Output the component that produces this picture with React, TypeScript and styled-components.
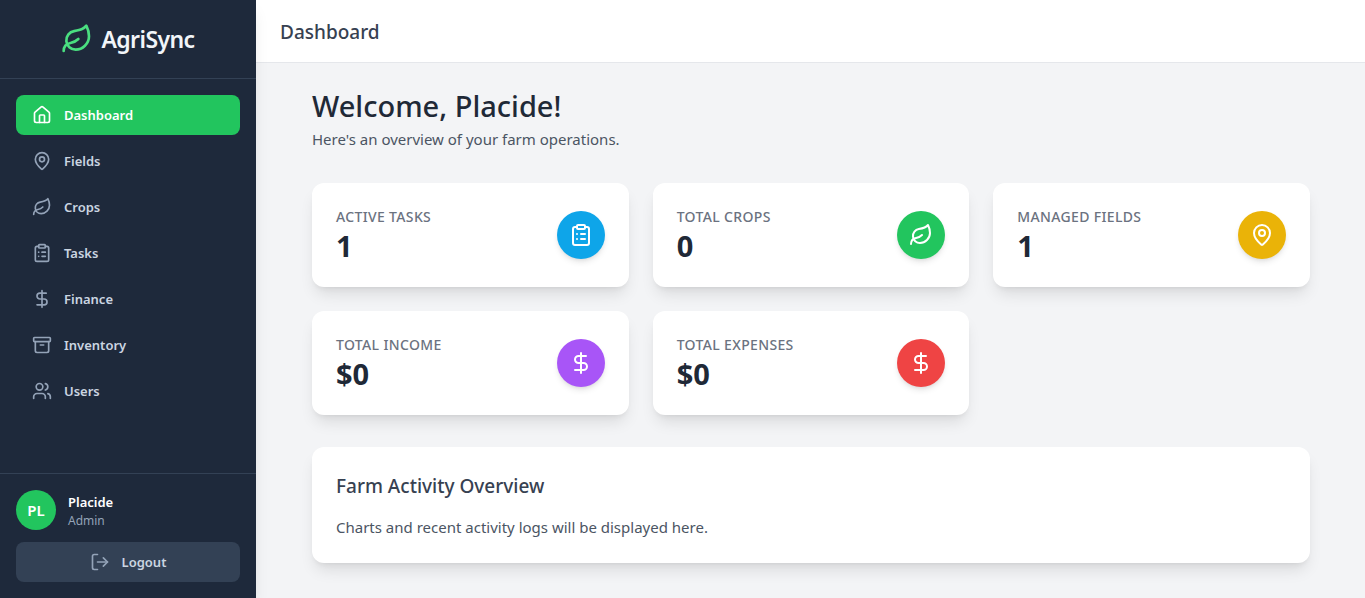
import React from "react";
import styled, { createGlobalStyle } from "styled-components";
import {
  Archive,
  ClipboardList,
  DollarSign,
  House,
  Leaf,
  LogOut,
  MapPin,
  Users,
  type LucideIcon,
} from "lucide-react";

const GlobalStyle = createGlobalStyle`
  *, *::before, *::after { box-sizing: border-box; }
  body {
    margin: 0;
    background: #f3f4f6;
    color: #1f2937;
    font-family: "Segoe UI", "Noto Sans", "Open Sans", sans-serif;
    font-size: 15px;
    line-height: 24px;
  }
  h1, h2, h3, p, ul, dl, dt, dd { margin: 0; padding: 0; }
`;

const Shell = styled.div`
  display: flex;
  min-height: 100vh;
`;

const Sidebar = styled.aside`
  position: relative;
  display: flex;
  flex-direction: column;
  flex: 0 0 256px;
  background: #1e293b;
  color: #f1f5f9;
  box-shadow: 0 10px 15px -3px rgba(0, 0, 0, 0.1), 0 4px 6px -4px rgba(0, 0, 0, 0.1);
`;

const Brand = styled.div`
  display: flex;
  align-items: center;
  justify-content: center;
  gap: 8px;
  padding: 20px;
  border-bottom: 1px solid #334155;
  font-size: 23px;
  font-weight: 600;
  line-height: 38px;
  letter-spacing: -0.025em;

  svg { color: #4ade80; }
`;

const Nav = styled.nav`
  flex: 1;
  padding: 16px;
`;

const NavList = styled.ul`
  display: flex;
  flex-direction: column;
  gap: 6px;
  list-style: none;
`;

const NavLink = styled.a<{ $active: boolean }>`
  display: flex;
  align-items: center;
  gap: 12px;
  padding: 10px 16px;
  border-radius: 8px;
  background: ${(p) => (p.$active ? "#22c55e" : "transparent")};
  color: ${(p) => (p.$active ? "#ffffff" : "#cbd5e1")};
  font-size: 13px;
  font-weight: 600;
  line-height: 20px;
  text-decoration: none;

  svg { color: ${(p) => (p.$active ? "#ffffff" : "#94a3b8")}; }
`;

const Account = styled.div`
  display: flex;
  flex-direction: column;
  gap: 12px;
  padding: 16px;
  border-top: 1px solid #334155;
`;

const Profile = styled.div`
  display: flex;
  align-items: center;
  gap: 12px;
`;

const Avatar = styled.span`
  display: grid;
  place-items: center;
  width: 40px;
  height: 40px;
  border-radius: 50%;
  background: #22c55e;
  color: #ffffff;
  font-size: 15px;
  font-weight: 600;
`;

const ProfileName = styled.p`
  color: #ffffff;
  font-size: 13px;
  font-weight: 600;
  line-height: 22px;
`;

const ProfileRole = styled.p`
  color: #94a3b8;
  font-size: 12px;
  line-height: 16px;
`;

const LogoutButton = styled.button`
  display: flex;
  align-items: center;
  justify-content: center;
  gap: 12px;
  padding: 10px 16px;
  border: 0;
  border-radius: 8px;
  background: #334155;
  color: #cbd5e1;
  font: inherit;
  font-size: 13px;
  font-weight: 600;
  line-height: 20px;
  cursor: pointer;

  svg { color: #94a3b8; }
`;

const Content = styled.div`
  flex: 1;
  min-width: 0;
`;

const TopBar = styled.header`
  padding: 17px 24px 15px;
  border-bottom: 1px solid #e5e7eb;
  background: #ffffff;
`;

const PageTitle = styled.h2`
  color: #374151;
  font-size: 19px;
  font-weight: 500;
  line-height: 30px;
`;

const Main = styled.main`
  display: flex;
  flex-direction: column;
  gap: 32px;
  padding: 24px 55px 32px 56px;
`;

const Greeting = styled.h1`
  margin-bottom: 2px;
  font-size: 29px;
  font-weight: 500;
  line-height: 38px;
`;

const Copy = styled.p`
  color: #4b5563;
`;

const StatGrid = styled.dl`
  display: grid;
  grid-template-columns: repeat(3, minmax(0, 1fr));
  gap: 24px;
`;

const Card = styled.div`
  padding: 24px;
  border-radius: 12px;
  background: #ffffff;
  box-shadow: 0 10px 15px -3px rgba(0, 0, 0, 0.1), 0 4px 6px -4px rgba(0, 0, 0, 0.1);
`;

const StatCard = styled(Card)`
  display: grid;
  grid-template-columns: 1fr auto;
  align-items: center;
`;

const StatLabel = styled.dt`
  color: #6b7280;
  font-size: 14px;
  font-weight: 500;
  line-height: 20px;
  letter-spacing: 0.025em;
  text-transform: uppercase;
`;

const StatValue = styled.dd`
  grid-column: 1;
  padding-top: 2px;
  font-size: 29px;
  font-weight: 700;
  line-height: 34px;
`;

const StatBadge = styled.dd<{ $color: string }>`
  display: grid;
  grid-column: 2;
  grid-row: 1 / span 2;
  place-items: center;
  width: 48px;
  height: 48px;
  border-radius: 50%;
  background: ${(p) => p.$color};
  color: #ffffff;
  box-shadow: 0 4px 6px -1px rgba(0, 0, 0, 0.1), 0 2px 4px -2px rgba(0, 0, 0, 0.1);
`;

const SectionTitle = styled.h3`
  margin-bottom: 14px;
  color: #374151;
  font-size: 19px;
  font-weight: 500;
  line-height: 30px;
`;

const navItems: { label: string; icon: LucideIcon }[] = [
  { label: "Dashboard", icon: House },
  { label: "Fields", icon: MapPin },
  { label: "Crops", icon: Leaf },
  { label: "Tasks", icon: ClipboardList },
  { label: "Finance", icon: DollarSign },
  { label: "Inventory", icon: Archive },
  { label: "Users", icon: Users },
];

const stats: { label: string; value: string; icon: LucideIcon; color: string }[] = [
  { label: "Active Tasks", value: "1", icon: ClipboardList, color: "#0ea5e9" },
  { label: "Total Crops", value: "0", icon: Leaf, color: "#22c55e" },
  { label: "Managed Fields", value: "1", icon: MapPin, color: "#eab308" },
  { label: "Total Income", value: "$0", icon: DollarSign, color: "#a855f7" },
  { label: "Total Expenses", value: "$0", icon: DollarSign, color: "#ef4444" },
];

export default function App() {
  return (
    <>
      <GlobalStyle />
      <Shell>
        <Sidebar>
          <Brand>
            <Leaf size={32} />
            <span>AgriSync</span>
          </Brand>
          <Nav>
            <NavList>
              {navItems.map(({ label, icon: Icon }) => (
                <li key={label}>
                  <NavLink
                    href={`#${label.toLowerCase()}`}
                    $active={label === "Dashboard"}
                    aria-current={label === "Dashboard" ? "page" : undefined}
                  >
                    <Icon size={20} />
                    {label}
                  </NavLink>
                </li>
              ))}
            </NavList>
          </Nav>
          <Account>
            <Profile>
              <Avatar>PL</Avatar>
              <div>
                <ProfileName>Placide</ProfileName>
                <ProfileRole>Admin</ProfileRole>
              </div>
            </Profile>
            <LogoutButton type="button">
              <LogOut size={20} />
              Logout
            </LogoutButton>
          </Account>
        </Sidebar>
        <Content>
          <TopBar>
            <PageTitle>Dashboard</PageTitle>
          </TopBar>
          <Main>
            <div>
              <Greeting>Welcome, Placide!</Greeting>
              <Copy>Here's an overview of your farm operations.</Copy>
            </div>
            <StatGrid>
              {stats.map(({ label, value, icon: Icon, color }) => (
                <StatCard key={label}>
                  <StatLabel>{label}</StatLabel>
                  <StatValue>{value}</StatValue>
                  <StatBadge $color={color} aria-hidden="true">
                    <Icon size={24} />
                  </StatBadge>
                </StatCard>
              ))}
            </StatGrid>
            <Card>
              <SectionTitle>Farm Activity Overview</SectionTitle>
              <Copy>Charts and recent activity logs will be displayed here.</Copy>
            </Card>
          </Main>
        </Content>
      </Shell>
    </>
  );
}
